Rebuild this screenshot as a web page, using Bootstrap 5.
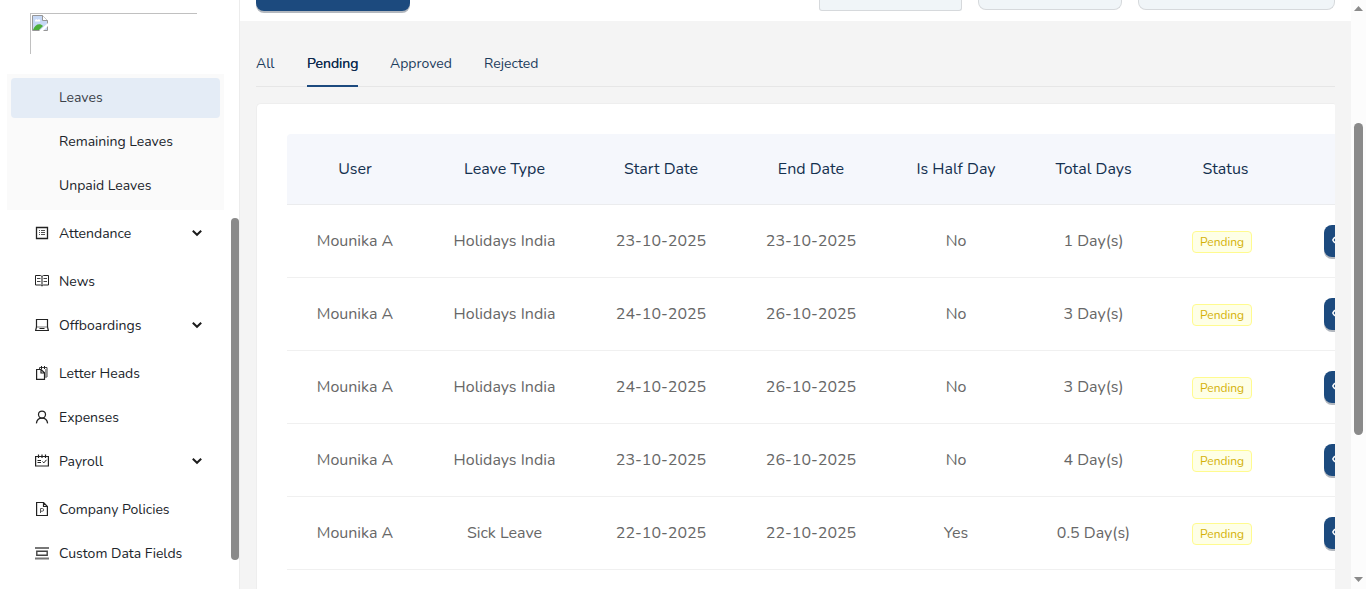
<!DOCTYPE html>
<html lang="en">
<head>
<meta charset="utf-8">
<meta name="viewport" content="width=device-width, initial-scale=1">
<title>Leaves</title>
<link href="https://cdn.jsdelivr.net/npm/bootstrap@5.3.0/dist/css/bootstrap.min.css" rel="stylesheet">
<style>
  body { font-family: Nunito, Lato, "Liberation Sans", sans-serif; font-size: 14px; color: #20242a; background: #f4f4f4; }
  svg { display: block; flex: none; }
  /* sidebar */
  .side { width: 240px; border-right: 1px solid #ececec; }
  .side-body { width: 231px; }
  .logo-slot { width: 167px; height: 41px; margin: 13px 0 20px 30px; border: solid #c0c0c0; border-width: 1px 0 0 1px; padding: 1px; }
  .submenu { margin: 0 7px 3px; padding: 4px; background: #fafafa; }
  .menu-link { height: 40px; line-height: 40px; padding-left: 48px; border-radius: 4px; margin-bottom: 4px; }
  .submenu .menu-link:last-child { margin-bottom: 0; }
  .menu-link.active { background: #e4ecf6; color: #3b4149; }
  .menu-item { height: 40px; margin: 0 28px 4px 35px; gap: 10px; }
  .menu-item span { margin-top: 1px; }
  .menu-item.group { margin-bottom: 8px; }
  .thumb { background: #8a8a8a; border-radius: 4px; }
  .side-rail { width: 8px; padding-top: 218px; }
  .side-rail .thumb { height: 342px; }
  /* top strip */
  .top-strip { height: 21px; padding: 0 16px; }
  .btn-cut { width: 154px; height: 11px; background: #1c4a7e; border-radius: 0 0 8px 8px; box-shadow: 0 2px 0 #b3b8bf; }
  .field { height: 10px; background: #f0f5f8; border: 1px solid #d6d9dc; border-top: 0; border-radius: 0 0 8px 8px; }
  .field.sharp { height: 11px; border-radius: 0 0 3px 3px; }
  .w-a { width: 143px; } .w-b { width: 144px; } .w-c { width: 197px; }
  /* tabs */
  .tabs { height: 66px; margin: 0 16px; padding-top: 22px; gap: 32px; border-bottom: 1px solid #e6e6e6; }
  .tabs div { height: 44px; line-height: 41px; color: #1c3c5c; white-space: nowrap; }
  .tabs .on { border-bottom: 2px solid #1c4a7e; color: #0f2a4d; text-shadow: 0 0 .25px #0f2a4d; }
  .t1 { width: 19px; } .t2 { width: 51px; } .t3 { width: 62px; } .t4 { width: 54px; }
  /* table */
  .panel { height: 640px; margin: 16px 16px 0; border: 1px solid #eee; border-right: 0; border-radius: 5px 2px 0 0; padding: 30px 0 0 30px; }
  .leaves { width: 1200px; table-layout: fixed; font-size: 16px; text-align: center; border-collapse: separate; border-spacing: 0; }
  .leaves th { height: 71px; background: #f5f7fc; color: #14304f; font-weight: 400; border-bottom: 1px solid #ebecee; padding: 0 0 1px; vertical-align: middle; }
  .leaves th:first-child { border-top-left-radius: 4px; }
  .leaves td { height: 73px; color: #676767; border-bottom: 1px solid #f0f0f0; padding: 0; vertical-align: middle; white-space: nowrap; }
  .leaves td:last-child { padding: 0 0 0 34px; }
  .pill { display: block; width: 60px; height: 22px; margin: 2px auto 0 31px; line-height: 21px; font-size: 12px; color: #d4b106; background: #feffe6; border: 1px solid #fffb8f; border-radius: 4px; }
  .act { width: 48px; height: 32px; background: #1c4a7e; border-radius: 8px; box-shadow: 0 2px 0 #b3b8bf; padding: 8px 0 0 7.5px; }
  /* page scrollbar */
  .rail { width: 15px; background: #fcfcfc; padding: 6px 3px 7px; }
  .rail .thumb { width: 9px; height: 312px; margin-top: 112px; border-radius: 5px; }
</style>
</head>
<body>
<div class="d-flex vh-100 overflow-hidden">
  <aside class="side bg-white d-flex flex-shrink-0">
    <div class="side-body flex-shrink-0">
      <div class="logo-slot">
        <svg width="16" height="16" viewBox="0 0 16 16"><path d="M.5.5h10l5 5v10H.5z" fill="#c6d8f5" stroke="#969696"/><path d="M3 6c0-2 2-2 2.500-1C7 3 9 5 8 6.500H3z" fill="#fff"/><path d="M1 15c2-6 7-7 10-4l-4 4z" fill="#4caf3a"/><path d="M7 16l9-8v3l-5 5z" fill="#fff"/><path d="M10.500.5v5h5" fill="#fff" stroke="#969696"/></svg>
      </div>
      <div class="submenu">
        <div class="menu-link active">Leaves</div>
        <div class="menu-link">Remaining Leaves</div>
        <div class="menu-link">Unpaid Leaves</div>
      </div>
      <div class="menu-item group d-flex align-items-center">
        <svg width="14" height="14" fill="none" stroke="#222"><path d="M1.500 1.500h11v11h-11z" stroke-width="1.300"/><path d="M4 4.500h1M6 4.500h4M4 6.500h1M6 6.500h4M4 8.500h1M6 8.500h4" stroke="#555"/></svg>
        <span class="me-auto">Attendance</span>
        <svg width="12" height="8" fill="none" stroke="#1c1c1c" stroke-width="2"><path d="M1.800 1.800l4.200 4 4.200-4"/></svg>
      </div>
      <div class="menu-item d-flex align-items-center">
        <svg width="14" height="14" fill="none" stroke="#222"><path d="M.5 1.500H5.500L7 2.500 8.500 1.500h5v9.500h-5L7 12 5.500 11h-5z"/><path d="M7 2.500v9" stroke="#666" stroke-width="1.500"/><path d="M2 4.500h3.500M2 7.500h3.500M8.500 4.500H12M8.500 7.500H12" stroke="#444"/></svg>
        <span>News</span>
      </div>
      <div class="menu-item group d-flex align-items-center">
        <svg width="14" height="14" fill="none" stroke="#222"><path d="M1.500 9V1.500h11V9" stroke-width="1.200"/><path d="M2 9h10" stroke="#777"/><path d="M1.500 9L.6 12.500h12.800L12.500 9M4.500 10.500h5" stroke-width="1.200"/></svg>
        <span class="me-auto">Offboardings</span>
        <svg width="12" height="8" fill="none" stroke="#1c1c1c" stroke-width="2"><path d="M1.800 1.800l4.200 4 4.200-4"/></svg>
      </div>
      <div class="menu-item d-flex align-items-center">
        <svg width="14" height="14" fill="none" stroke="#222"><path d="M1.600 3.500h4.500L9.500 6.800v6.600H1.600zM6 3.500v3.500h3.500" stroke-width="1.200"/><path d="M4.500 3V1.500h7.500v9.500H10" stroke="#444"/><path d="M6.500 0v3M9.500 0v3"/><path d="M10.900 3v8" stroke="#888" stroke-width="1.600"/></svg>
        <span>Letter Heads</span>
      </div>
      <div class="menu-item d-flex align-items-center">
        <svg width="14" height="14" fill="none" stroke="#222" stroke-width="1.250"><circle cx="7" cy="4.500" r="3.500"/><path d="M1.400 13.400C1.700 10.200 4 8 7 8s5.300 2.200 5.600 5.400"/></svg>
        <span>Expenses</span>
      </div>
      <div class="menu-item group d-flex align-items-center">
        <svg width="14" height="14" fill="none" stroke="#222"><path d="M.6 2.500h12.800v9.500H.6zM3.500.5v3.500M7 .5v3.500M10.500.5v3.500" stroke-width="1.200"/><path d="M2.500 6.500H6M2.500 8.500H6M7.500 7.500l1.300 1.400L11.500 5.800"/></svg>
        <span class="me-auto">Payroll</span>
        <svg width="12" height="8" fill="none" stroke="#1c1c1c" stroke-width="2"><path d="M1.800 1.800l4.200 4 4.200-4"/></svg>
      </div>
      <div class="menu-item d-flex align-items-center">
        <svg width="14" height="14" fill="none" stroke="#222"><path d="M1.600.5H8.500L12.400 4.500v9H1.600zM8.500.5v4h4" stroke-width="1.200"/><path d="M5.500 11V6.500h1.800a1.300 1.300 0 0 1 0 2.700H5.500" stroke="#555"/></svg>
        <span>Company Policies</span>
      </div>
      <div class="menu-item d-flex align-items-center">
        <svg width="14" height="14" fill="none" stroke="#444"><path d="M0 2h14M0 12.500h14" stroke="#777" stroke-width="1.800"/><path d="M1.800 5.300h10.400v4H1.800z" stroke-width="1.400"/></svg>
        <span>Custom Data Fields</span>
      </div>
    </div>
    <div class="side-rail"><div class="thumb"></div></div>
  </aside>

  <main class="flex-fill overflow-hidden">
    <div class="top-strip bg-white d-flex align-items-start gap-3">
      <div class="btn-cut me-auto"></div>
      <div class="field sharp w-a"></div>
      <div class="field w-b"></div>
      <div class="field w-c"></div>
    </div>
    <div class="tabs d-flex">
      <div class="t1">All</div><div class="t2 on">Pending</div><div class="t3">Approved</div><div class="t4">Rejected</div>
    </div>
    <div class="panel bg-white overflow-hidden">
      <table class="leaves">
        <colgroup><col width="136"><col width="163"><col width="150"><col width="150"><col width="140"><col width="135"><col width="129"><col width="197"></colgroup>
        <thead><tr><th>User</th><th>Leave Type</th><th>Start Date</th><th>End Date</th><th>Is Half Day</th><th>Total Days</th><th>Status</th><th></th></tr></thead>
        <tbody id="rows"></tbody>
      </table>
    </div>
  </main>

  <div class="rail d-flex flex-column align-items-center flex-shrink-0">
    <svg width="9" height="5"><path d="M0 5L4.500 0 9 5z" fill="#8a8a8a"/></svg>
    <div class="thumb mb-auto"></div>
    <svg width="9" height="5"><path d="M0 0l4.500 5L9 0z" fill="#8a8a8a"/></svg>
  </div>
</div>
<script src="https://cdn.jsdelivr.net/npm/bootstrap@5.3.0/dist/js/bootstrap.bundle.min.js"></script>
<script>
  const eye = '<svg width="16" height="14" fill="none" stroke="#fff" stroke-width="1.500"><path d="M.8 7C3 1.800 13 1.800 15.200 7 13 12.200 3 12.200.8 7z"/><circle cx="8" cy="7" r="2.300"/></svg>';
  const leaves = [
    ['Holidays India', '23-10-2025', '23-10-2025', 'No', '1 Day(s)'],
    ['Holidays India', '24-10-2025', '26-10-2025', 'No', '3 Day(s)'],
    ['Holidays India', '24-10-2025', '26-10-2025', 'No', '3 Day(s)'],
    ['Holidays India', '23-10-2025', '26-10-2025', 'No', '4 Day(s)'],
    ['Sick Leave', '22-10-2025', '22-10-2025', 'Yes', '0.5 Day(s)']
  ];
  document.getElementById('rows').innerHTML = leaves.map(([type, from, to, half, days]) =>
    `<tr><td>Mounika A</td><td>${type}</td><td>${from}</td><td>${to}</td><td>${half}</td><td>${days}</td><td><span class="pill">Pending</span></td><td><div class="act">${eye}</div></td></tr>`
  ).join('');
</script>
</body>
</html>
